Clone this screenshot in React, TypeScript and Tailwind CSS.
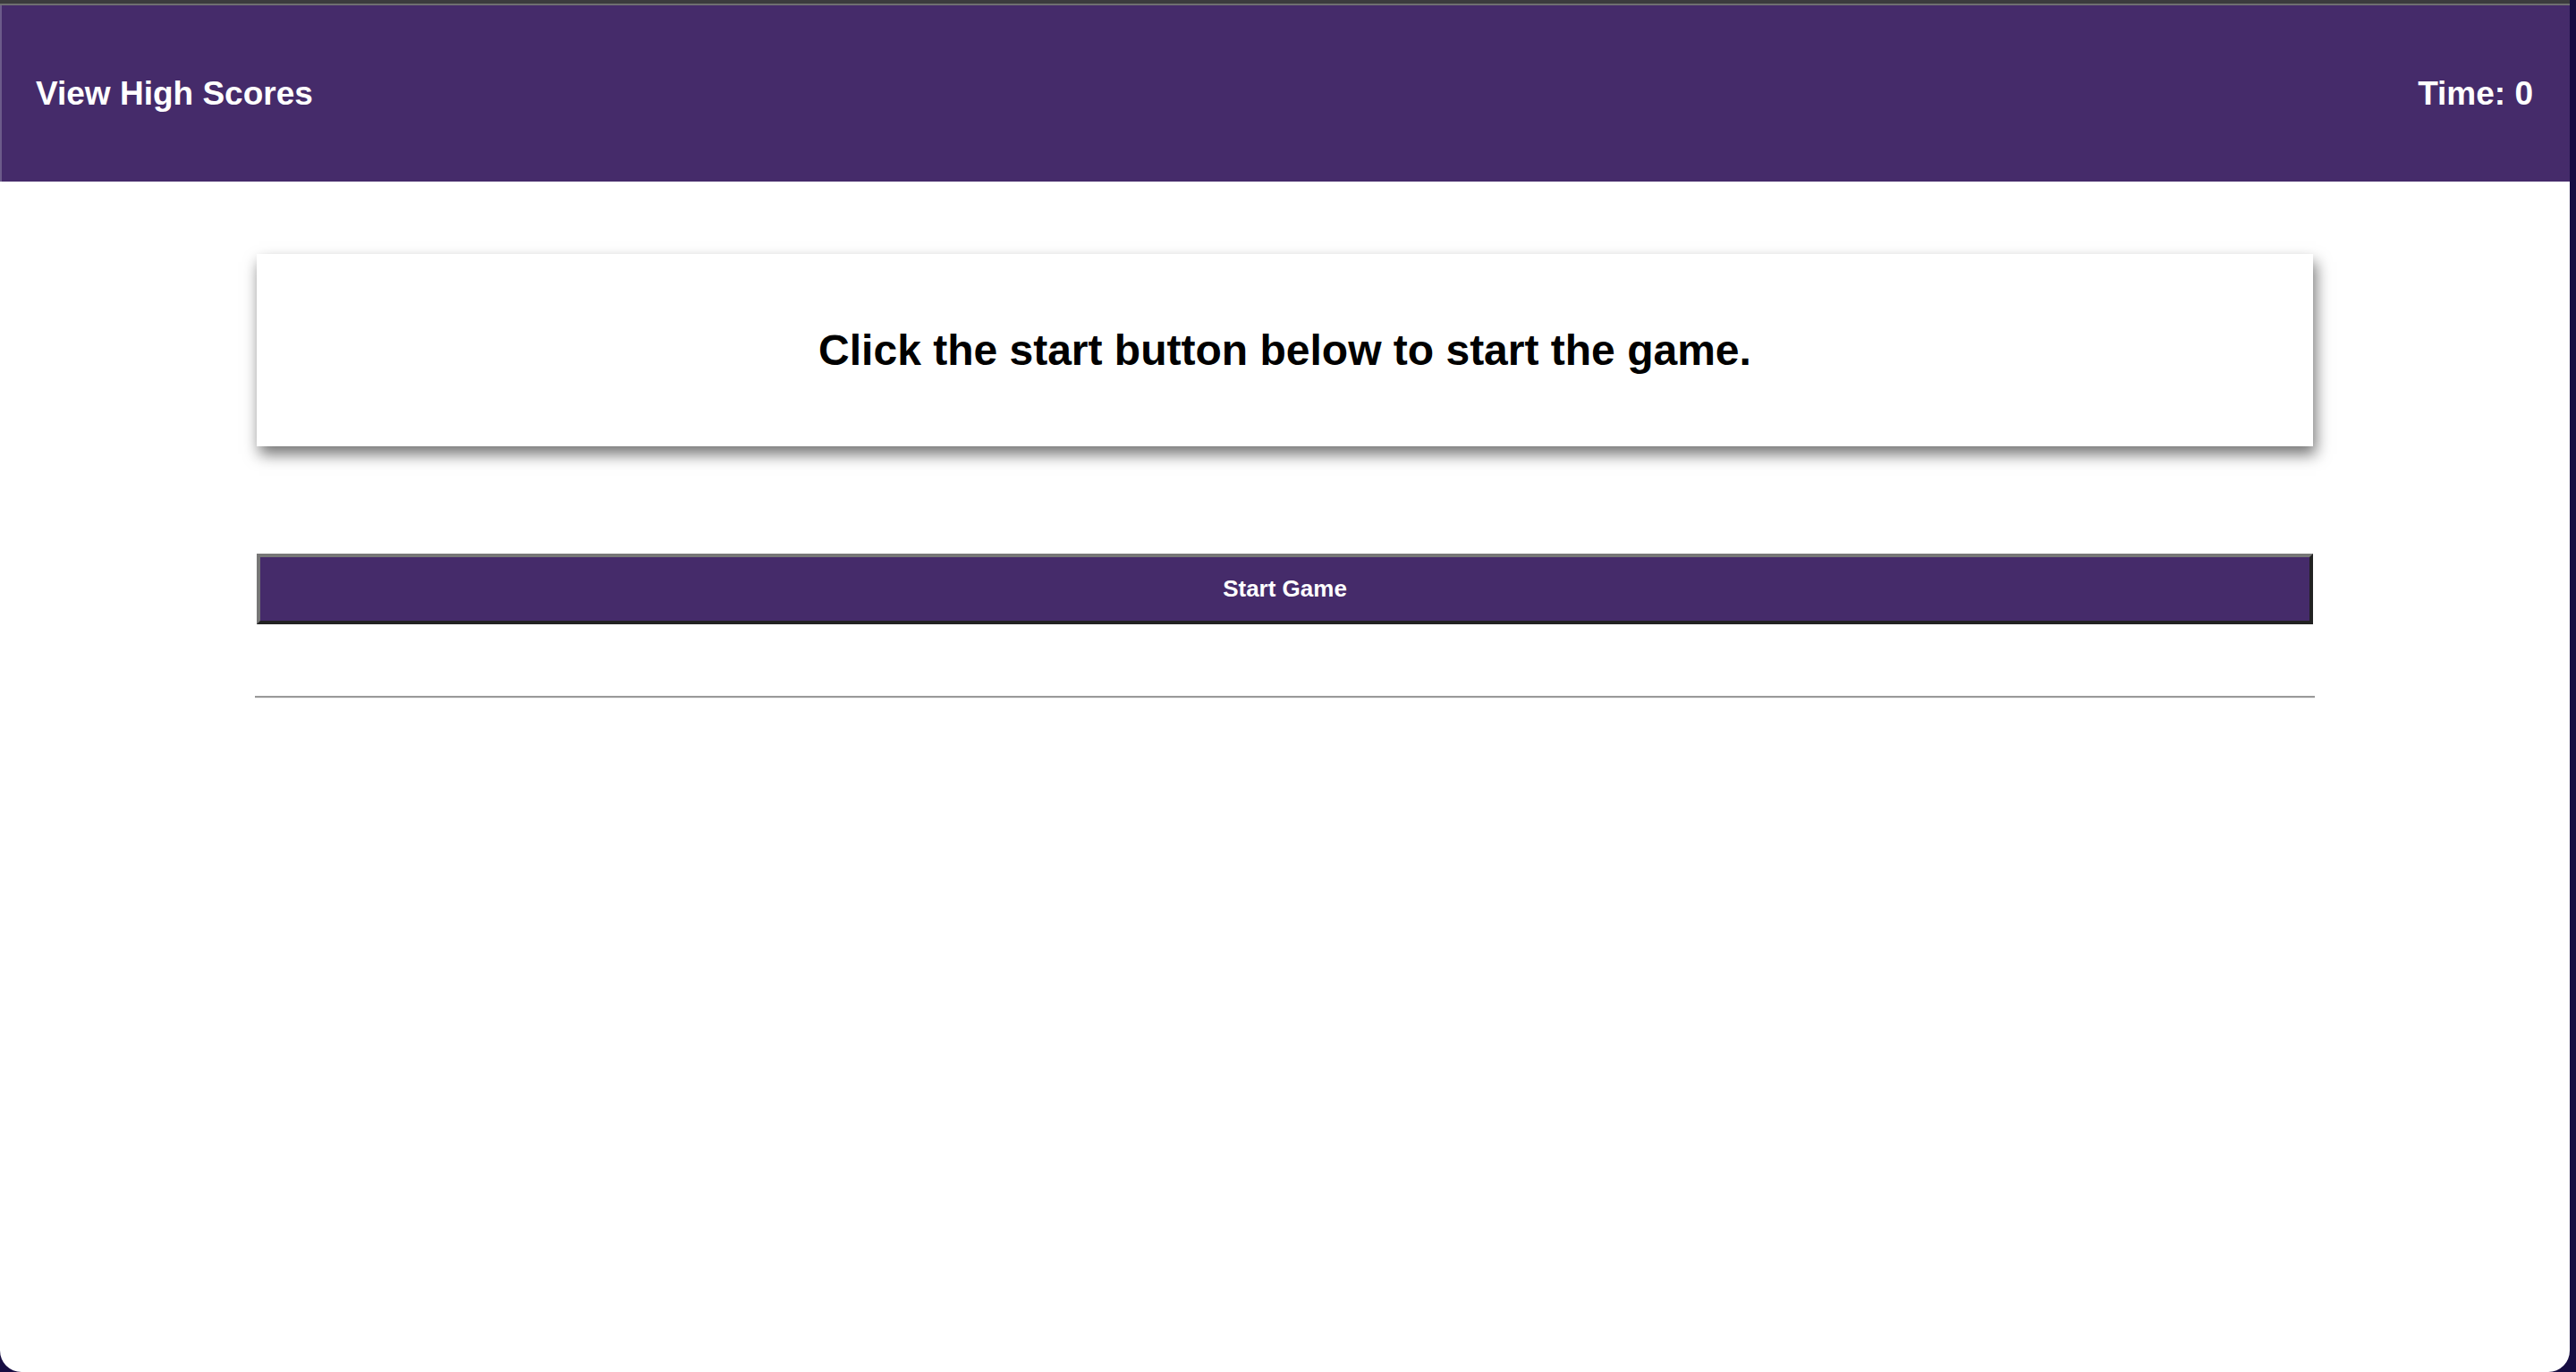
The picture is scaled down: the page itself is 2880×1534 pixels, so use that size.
export default function App() {
  return (
    <div className="flex h-[1534px] w-full bg-[#170d42]" style={{ fontFamily: '"Liberation Sans", Arial, sans-serif' }}>
      <div className="flex h-full w-[2873px] flex-col overflow-hidden rounded-b-[24px] bg-white">
        <div className="h-[4px] bg-[#3b3b3d]" />
        <div className="h-[2px] bg-[#6e6e70]" />
        <header className="flex h-[197px] items-center justify-between border-l-2 border-[#6c5b8a] bg-[#452b6a] pl-[38px] pr-[41px] text-white">
          <a className="text-[37px] font-bold">View High Scores</a>
          <p className="text-[37px] font-bold">Time: 0</p>
        </header>

        <main className="mx-auto flex w-[80%] flex-col pt-[81px]">
          <div className="flex h-[215px] items-center justify-center bg-white shadow-[3px_9px_16px_rgba(0,0,0,0.55)]">
            <h1 className="text-[48px] font-bold text-black">Click the start button below to start the game.</h1>
          </div>

          <button className="mt-[120px] h-[79px] w-full border-4 border-t-[#777777] border-l-[#777777] border-b-[#222222] border-r-[#222222] bg-[#452b6a] text-[26px] font-bold text-white">
            Start Game
          </button>

          <hr className="-mx-[2px] mt-[80px] border-t-2 border-b border-t-[#9a9a9a] border-b-[#eeeeee]" />
        </main>
      </div>
    </div>
  );
}
